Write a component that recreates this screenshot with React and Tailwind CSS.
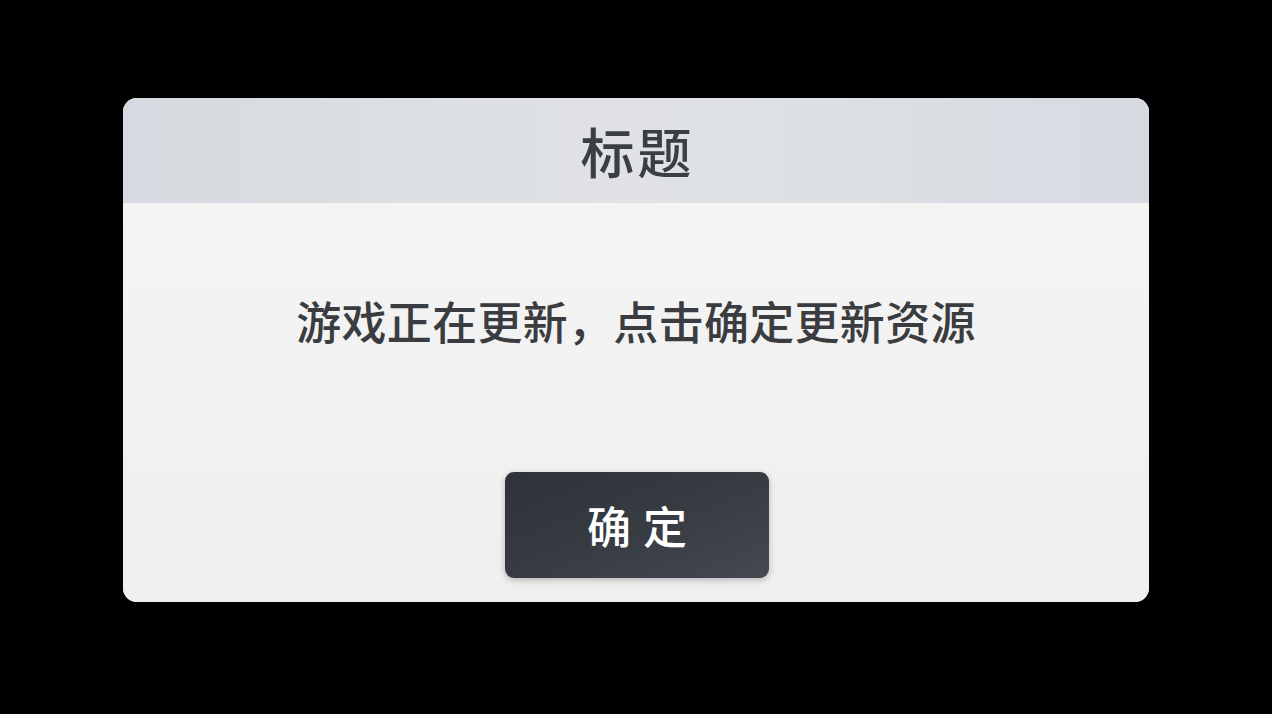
import React from 'react';

export default function App() {
    return (
        <div
            className="w-full h-[714px] bg-black flex justify-center pt-[98px]"
            style={{ fontFamily: '"Noto Sans CJK SC", "Noto Sans", sans-serif' }}
        >
            {/* dialog card */}
            <div className="w-[1026px] h-[504px] rounded-[14px] overflow-hidden flex flex-col bg-[#f1f1f1]">
                {/* header */}
                <div className="h-[105px] bg-gradient-to-r from-[#d6dae0] via-[#e0e2e5] to-[#d6dbe2] flex items-center justify-center">
                    <span className="text-[54px] leading-none font-medium text-[#3b3e43] tracking-[3px] pl-[3px]">标题</span>
                </div>

                {/* body */}
                <div className="flex-1 flex flex-col items-center bg-gradient-to-b from-[#f4f4f4] to-[#efefef]">
                    <p className="mt-[95px] text-[45px] leading-none text-[#3a3c40] font-medium tracking-[0.3px]">
                        游戏正在更新，点击确定更新资源
                    </p>
                    <div className="flex-1" />
                    <button className="mb-[24px] ml-[2px] w-[264px] h-[106px] rounded-[9px] bg-gradient-to-br from-[#2f3238] via-[#373b42] to-[#444952] shadow-[0_2px_6px_rgba(0,0,0,0.25)] flex items-center justify-center">
                        <span className="text-[44px] leading-none text-white font-medium tracking-[12px] pl-[12px]">确定</span>
                    </button>
                </div>
            </div>
        </div>
    );
}
